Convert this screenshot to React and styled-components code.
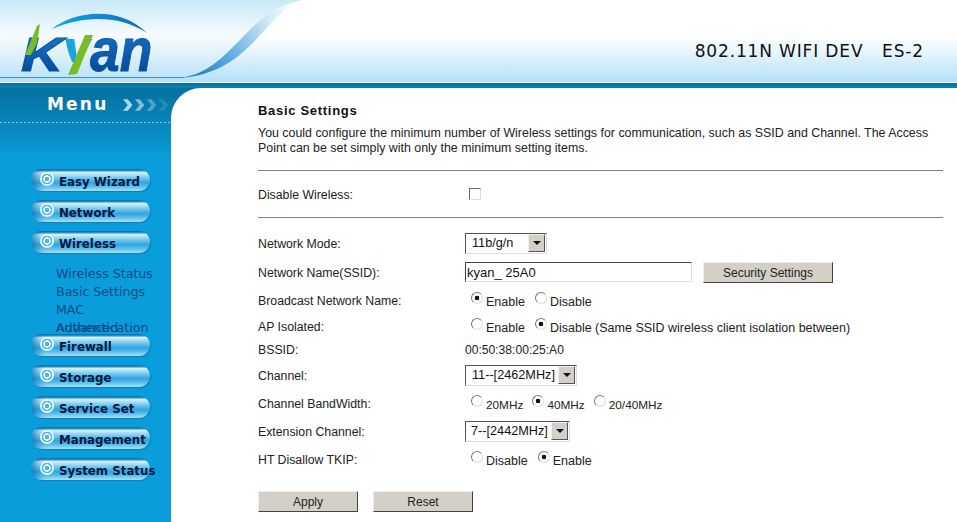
import styled, { createGlobalStyle } from "styled-components";

const GlobalStyle = createGlobalStyle`
  html, body {
    margin: 0;
    padding: 0;
    height: 100%;
    overflow: hidden;
    background: #fff;
    font-family: "Liberation Sans", Arial, sans-serif;
  }
`;

const menuTop = ["Easy Wizard", "Network", "Wireless"];
const menuBottom = ["Firewall", "Storage", "Service Set", "Management", "System Status"];

const Page = styled.div`
  width: 957px;
  height: 522px;
  overflow: hidden;
`;

const Header = styled.header`
  position: relative;
  height: 82px;
  display: flex;
  align-items: flex-start;
  justify-content: space-between;
  overflow: hidden;
  background: linear-gradient(#fff 0, #fff 36px, #e6f5fd 52px, #b4e0f9 82px);
`;

const HeaderArt = styled.svg`
  position: absolute;
  left: 0;
  top: 0;
`;

const LogoWrap = styled.svg`
  position: relative;
  display: block;
  margin: 5px 0 0 10px;
`;

const DeviceName = styled.div`
  position: relative;
  margin: 41px 33px 0 0;
  font: 17px/20px "DejaVu Sans", Verdana, sans-serif;
  letter-spacing: 0.85px;
  color: #111;
  white-space: pre;
`;

const Stripe = styled.div`
  height: 6px;
  border-top: 1px solid #fff;
  box-sizing: border-box;
  background: linear-gradient(#0b6d9c, #0883ad);
`;

const Body = styled.div`
  display: flex;
  height: 434px;
  background: linear-gradient(#06719e 0, #0881b8 30px, #0a9ddb 70px, #0a9ddb 100%);
`;

const Sidebar = styled.aside`
  width: 171px;
  flex: none;
`;

const MenuHead = styled.div`
  display: flex;
  align-items: center;
  gap: 15px;
  height: 35px;
  box-sizing: border-box;
  padding: 0 0 1px 47px;
  background: repeating-linear-gradient(90deg, #7fd0ea 0 2px, transparent 2px 4px) left bottom / 100% 1px no-repeat;
`;

const MenuTitle = styled.div`
  margin-top: -2px;
  font: bold 17px/20px "DejaVu Sans", Verdana, sans-serif;
  letter-spacing: 2.2px;
  color: #fff;
`;

const Nav = styled.nav`
  display: flex;
  flex-direction: column;
  gap: 9px;
  padding: 46px 0 0 31px;
`;

const Pill = styled.a`
  display: flex;
  align-items: center;
  gap: 5px;
  width: 119px;
  height: 22px;
  box-sizing: border-box;
  padding: 4px 0 0 9px;
  border-radius: 11px;
  background: linear-gradient(#0b78b4 0, #0b78b4 5%, #d6f0fb 16%, #7ccbef 38%, #2ea6e2 62%, #5bbdec 80%, #b4e4f8 100%);
  box-shadow: inset 9px 0 7px -5px rgba(6, 105, 170, 0.7), 1px 1px 1px rgba(5, 90, 140, 0.4);
  font: bold 11.8px/14px "DejaVu Sans", Verdana, sans-serif;
  color: #04173c;
  white-space: nowrap;
`;

const Bullet = styled.span`
  flex: none;
  width: 14px;
  height: 14px;
  margin-top: -7px;
  border-radius: 50%;
  background: radial-gradient(circle, #4fb4e6 0 2px, #e6f6fd 2.5px 3.5px, #4fb4e6 4px 5px, #e6f6fd 5.5px 7px);
`;

const SubMenu = styled.div`
  height: 60px;
  padding: 3px 0 0 25px;
`;

const SubItem = styled.div`
  position: relative;
  font: 12.6px/18px "DejaVu Sans", Verdana, sans-serif;
  color: #0b4a86;
  white-space: nowrap;
`;

const SubOverlap = styled.span`
  position: absolute;
  left: 0;
  top: 0;
`;

const Content = styled.main`
  flex: 1;
  padding: 15px 14px 0 87px;
  background: #fff;
  border-top-left-radius: 30px;
  color: #222;
  font-size: 12.3px;
`;

const Title = styled.h1`
  margin: 0;
  font: bold 13px/16px "Liberation Sans", Arial, sans-serif;
  letter-spacing: 0.7px;
  color: #111;
`;

const Intro = styled.p`
  margin: 7px 0 0;
  font-size: 12.4px;
  line-height: 15px;
`;

const Rule = styled.hr`
  margin: ${(p) => p.$top}px 0 0;
  border: none;
  border-top: 1px solid #808080;
  height: 0;
`;

const Row = styled.div`
  display: flex;
  align-items: center;
  height: ${(p) => p.$h}px;
  margin-top: ${(p) => p.$top || 0}px;
`;

const Label = styled.div`
  width: 207px;
  flex: none;
  padding-top: 2px;
`;

const Field = styled.div`
  display: flex;
  align-items: center;
  padding-left: ${(p) => p.$indent || 0}px;
`;

const PlainValue = styled.div`
  padding-top: 2px;
  font-size: 12.1px;
`;

const Check = styled.input`
  appearance: none;
  width: 12px;
  height: 12px;
  margin: 0;
  box-sizing: border-box;
  background: #fff;
  border: 1px solid;
  border-color: #666 #ddd #ddd #666;
`;

const RadioLabel = styled.label`
  display: inline-flex;
  align-items: center;
  margin-right: ${(p) => (p.$small ? 9 : 10)}px;
  padding-top: 4px;
  font-size: ${(p) => (p.$small ? 11.8 : 12.5)}px;
`;

const Radio = styled.input`
  appearance: none;
  width: 12px;
  height: 12px;
  margin: -9px 3px 0 0;
  box-sizing: border-box;
  border-radius: 50%;
  border: 1px solid;
  border-color: #777 #ddd #ddd #777;
  background: ${(p) =>
    p.checked ? "radial-gradient(circle, #111 0 2px, #fff 2.6px)" : "#fff"};
`;

const SelectBox = styled.div`
  display: flex;
  align-items: center;
  justify-content: space-between;
  width: ${(p) => p.$w}px;
  height: 21px;
  box-sizing: border-box;
  padding: 0 1px 0 ${(p) => p.$pad}px;
  background: #fff;
  border: 1px solid;
  border-color: #555 #ddd #ddd #555;
  font-size: 12.7px;
  color: #111;
`;

const Arrow = styled.span`
  display: flex;
  align-items: center;
  justify-content: center;
  width: 15px;
  height: 16px;
  background: #d4d0c8;
  border: 1px solid;
  border-color: #eee #555 #555 #eee;
  &::after {
    content: "";
    border: 4px solid transparent;
    border-top: 4px solid #111;
    border-bottom: none;
  }
`;

const TextBox = styled.input`
  width: 227px;
  height: 20px;
  box-sizing: border-box;
  padding: 0 1px;
  background: #fff;
  border: 1px solid;
  border-color: #444 #ddd #ddd #444;
  font: 13px "Liberation Sans", Arial, sans-serif;
  color: #111;
  outline: none;
`;

const Button = styled.button`
  width: ${(p) => p.$w}px;
  height: 21px;
  margin: ${(p) => p.$drop || 0}px 0 0 ${(p) => p.$left || 0}px;
  padding: 0;
  background: #d4d0c8;
  border: 1px solid;
  border-color: #eee #444 #444 #eee;
  font: 12px "Liberation Sans", Arial, sans-serif;
  color: #222;
`;

const Actions = styled.div`
  display: flex;
  margin-top: 15px;
`;

const Rad = ({ on, children, name, small }) => (
  <RadioLabel $small={small}>
    <Radio type="radio" name={name} checked={!!on} readOnly />
    {children}
  </RadioLabel>
);

const Select = ({ w, pad = 6, value }) => (
  <SelectBox $w={w} $pad={pad}>
    <span>{value}</span>
    <Arrow />
  </SelectBox>
);

const Item = ({ children }) => (
  <Pill>
    <Bullet />
    {children}
  </Pill>
);

const HeaderBackdrop = () => (
  <HeaderArt width="957" height="82" viewBox="0 0 957 82">
    <defs>
      <linearGradient id="sky" x1="0" y1="0" x2="0" y2="1">
        <stop offset="0" stopColor="#c8e8f9" />
        <stop offset="0.45" stopColor="#f6fbfe" />
        <stop offset="0.7" stopColor="#dff1fb" />
        <stop offset="1" stopColor="#bde3f9" />
      </linearGradient>
      <linearGradient id="swoosh" x1="180" y1="78" x2="300" y2="0" gradientUnits="userSpaceOnUse">
        <stop offset="0" stopColor="#0f6fb8" />
        <stop offset="0.35" stopColor="#5aa8dc" />
        <stop offset="0.75" stopColor="#d4ecf9" />
        <stop offset="1" stopColor="#ffffff" />
      </linearGradient>
    </defs>
    <path d="M0 0H303C268 8 250 70 180 78H0Z" fill="url(#sky)" />
    <path d="M178 78C232 74 246 8 303 0C262 14 252 74 178 78Z" fill="url(#swoosh)" />
    <rect x="0" y="77" width="184" height="1" fill="#3f8fca" />
  </HeaderArt>
);

const logoFont = {
  fontFamily: "'Liberation Sans', Arial, sans-serif",
  fontWeight: "bold",
  fontStyle: "italic",
};

const Logo = () => (
  <LogoWrap width="150" height="77" viewBox="10 5 150 77">
    <defs>
      <linearGradient id="ink" x1="0" y1="0" x2="0" y2="1">
        <stop offset="0" stopColor="#1a7fd0" />
        <stop offset="1" stopColor="#03408f" />
      </linearGradient>
      <linearGradient id="arc" x1="52" y1="0" x2="148" y2="0" gradientUnits="userSpaceOnUse">
        <stop offset="0" stopColor="#17a5e2" />
        <stop offset="1" stopColor="#0b6cc0" />
      </linearGradient>
      <clipPath id="ystem">
        <polygon points="60,30 97,30 80,62 72,62" />
      </clipPath>
    </defs>
    <path d="M52 29C72 12 118 4 147 33C118 14 82 16 52 29Z" fill="url(#arc)" />
    <text {...logoFont} transform="translate(21 71) scale(1.22 1)" fontSize="48" fill="url(#ink)" stroke="#0a55a8" strokeWidth="1">
      K
    </text>
    <g clipPath="url(#ystem)">
      <text {...logoFont} x="62" y="71" fontSize="62" fill="#1ba5e0">
        y
      </text>
    </g>
    <text {...logoFont} transform="translate(90 71) scale(0.86 1)" fontSize="62" fill="url(#ink)" stroke="#0a55a8" strokeWidth="1">
      an
    </text>
    <polygon points="25,55 37,26 40,24 37,43 31,55" fill="#78bc2a" />
    <polygon points="68,75 85,35 93,35 77,74" fill="#78bc2a" />
  </LogoWrap>
);

const Chevrons = () => (
  <svg width="50" height="12" viewBox="0 0 50 12">
    {[0, 1, 2, 3].map((i) => (
      <path
        key={i}
        d={`M${i * 12.5} 0h5l5 6l-5 6h-5l5-6z`}
        fill="#c8e6f2"
        opacity={0.85 - i * 0.23}
      />
    ))}
  </svg>
);

export default function App() {
  return (
    <Page>
      <GlobalStyle />
      <Header>
        <HeaderBackdrop />
        <Logo />
        <DeviceName>{"802.11N WIFI DEV   ES-2"}</DeviceName>
      </Header>
      <Stripe />
      <Body>
        <Sidebar>
          <MenuHead>
            <MenuTitle>Menu</MenuTitle>
            <Chevrons />
          </MenuHead>
          <Nav>
            {menuTop.map((m) => (
              <Item key={m}>{m}</Item>
            ))}
            <SubMenu>
              <SubItem>Wireless Status</SubItem>
              <SubItem>Basic Settings</SubItem>
              <SubItem>MAC</SubItem>
              <SubItem>
                Authentication
                <SubOverlap>Advanced</SubOverlap>
              </SubItem>
            </SubMenu>
            {menuBottom.map((m) => (
              <Item key={m}>{m}</Item>
            ))}
          </Nav>
        </Sidebar>
        <Content>
          <Title>Basic Settings</Title>
          <Intro>
            You could configure the minimum number of Wireless settings for communication, such as SSID and Channel. The Access
            <br />
            Point can be set simply with only the minimum setting items.
          </Intro>
          <Rule $top={14} />
          <Row $h={46}>
            <Label>Disable Wireless:</Label>
            <Field $indent={4}>
              <Check type="checkbox" />
            </Field>
          </Row>
          <Rule $top={0} />
          <Row $h={38} $top={6}>
            <Label>Network Mode:</Label>
            <Field>
              <Select w={82} value="11b/g/n" />
            </Field>
          </Row>
          <Row $h={20}>
            <Label>Network Name(SSID):</Label>
            <Field>
              <TextBox defaultValue="kyan_ 25A0" />
              <Button $w={130} $left={11} $drop={1}>Security Settings</Button>
            </Field>
          </Row>
          <Row $h={36}>
            <Label>Broadcast Network Name:</Label>
            <Field $indent={6}>
              <Rad name="b" on>Enable</Rad>
              <Rad name="b">Disable</Rad>
            </Field>
          </Row>
          <Row $h={16}>
            <Label>AP Isolated:</Label>
            <Field $indent={6}>
              <Rad name="a">Enable</Rad>
              <Rad name="a" on>Disable (Same SSID wireless client isolation between)</Rad>
            </Field>
          </Row>
          <Row $h={30}>
            <Label>BSSID:</Label>
            <Field>
              <PlainValue>00:50:38:00:25:A0</PlainValue>
            </Field>
          </Row>
          <Row $h={22}>
            <Label>Channel:</Label>
            <Field>
              <Select w={112} value="11--[2462MHz]" />
            </Field>
          </Row>
          <Row $h={34}>
            <Label>Channel BandWidth:</Label>
            <Field $indent={6}>
              <Rad name="w" small>20MHz</Rad>
              <Rad name="w" small on>40MHz</Rad>
              <Rad name="w" small>20/40MHz</Rad>
            </Field>
          </Row>
          <Row $h={22}>
            <Label>Extension Channel:</Label>
            <Field>
              <Select w={105} pad={5} value="7--[2442MHz]" />
            </Field>
          </Row>
          <Row $h={34}>
            <Label>HT Disallow TKIP:</Label>
            <Field $indent={6}>
              <Rad name="t">Disable</Rad>
              <Rad name="t" on>Enable</Rad>
            </Field>
          </Row>
          <Actions>
            <Button $w={100}>Apply</Button>
            <Button $w={100} $left={15}>Reset</Button>
          </Actions>
        </Content>
      </Body>
    </Page>
  );
}
